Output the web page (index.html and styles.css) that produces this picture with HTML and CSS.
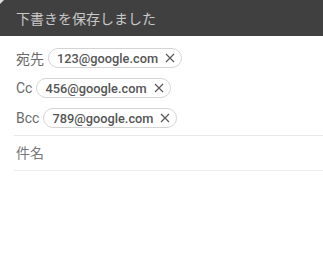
FILE: index.html
```html
<!DOCTYPE html>
<html lang="ja">

<head>
    <meta charset="UTF-8">
    <meta name="viewport" content="width=device-width, initial-scale=1.0">
    <title>下書き</title>
    <link rel="stylesheet" href="styles.css">
</head>

<body>

    <div class="toast">
        <span class="corner"></span>
        <p>下書きを保存しました</p>
    </div>

    <div class="compose">
        <div class="recipients">
            <div class="row">
                <span class="label">宛先</span>
                <span class="chip">123@google.com
                    <svg class="close" viewBox="0 0 10 10"><path d="M1 1L9 9M9 1L1 9" /></svg>
                </span>
            </div>
            <div class="row">
                <span class="label">Cc</span>
                <span class="chip">456@google.com
                    <svg class="close" viewBox="0 0 10 10"><path d="M1 1L9 9M9 1L1 9" /></svg>
                </span>
            </div>
            <div class="row">
                <span class="label">Bcc</span>
                <span class="chip">789@google.com
                    <svg class="close" viewBox="0 0 10 10"><path d="M1 1L9 9M9 1L1 9" /></svg>
                </span>
            </div>
        </div>
        <div class="subject">件名</div>
    </div>

</body>

</html>
```

FILE: styles.css
```css
body {
    margin: 0;
    font-family: Roboto, 'Noto Sans CJK JP', sans-serif;
    background-color: #fff;
    color: #333;
}

.toast {
    position: relative;
    height: 36px;
    background-color: #404040;
    display: flex;
    align-items: center;
    padding: 0 16px;
}

.toast .corner {
    position: absolute;
    top: 0;
    left: 0;
    width: 0;
    height: 0;
    border-top: 4px solid #ddd;
    border-right: 4px solid transparent;
}

.toast p {
    margin: 0;
    font-size: 14px;
    color: #c8c8c8;
}

.compose {
    margin-left: 14px;
}

.recipients {
    padding: 7px 0 2px;
    border-bottom: 1px solid #e8e8e8;
}

.row {
    display: flex;
    align-items: center;
    height: 30px;
    padding-left: 2px;
}

.label {
    font-size: 14px;
    color: #6a6a6a;
    margin-right: 4px;
}

.chip {
    display: inline-flex;
    align-items: center;
    height: 18px;
    padding: 0 6px 0 8px;
    border: 1px solid #d4d4d4;
    border-radius: 10px;
    font-size: 12.8px;
    font-weight: 500;
    color: #555;
}

.close {
    width: 10px;
    height: 10px;
    margin-left: 7px;
    stroke: #5a5a5a;
    stroke-width: 1.2;
    fill: none;
}

.subject {
    height: 34px;
    line-height: 34px;
    padding-left: 2px;
    font-size: 14px;
    color: #777;
    border-bottom: 1px solid #ececec;
}
```
